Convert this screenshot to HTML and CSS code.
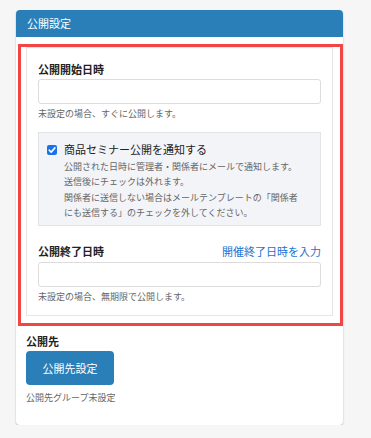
FILE: index.html
```html
<!DOCTYPE html>
<html lang="ja">
<head>
    <meta charset="UTF-8">
    <meta name="viewport" content="width=device-width, initial-scale=1.0">
    <title>公開設定</title>
    <link rel="stylesheet" href="styles.css">
</head>
<body>
    <div class="card">
        <div class="card-head">公開設定</div>
        <div class="card-body">
            <!-- 赤枠で囲んだ部分 -->
            <div class="mark">
                <div class="box">
                    <div class="field-label">公開開始日時</div>
                    <div class="text-input"></div>
                    <p class="help">未設定の場合、すぐに公開します。</p>

                    <div class="notice">
                        <div class="check-row">
                            <span class="check">
                                <svg viewBox="0 0 10 10" width="10" height="10"><path d="M2.2 5.2 L4.2 7.1 L7.9 2.9" fill="none" stroke="#fff" stroke-width="1.6" stroke-linecap="round" stroke-linejoin="round"/></svg>
                            </span>
                            <span>商品セミナー公開を通知する</span>
                        </div>
                        <p class="notice-text first">公開された日時に管理者・関係者にメールで通知します。<br>送信後にチェックは外れます。</p>
                        <p class="notice-text">関係者に送信しない場合はメールテンプレートの「関係者<br>にも送信する」のチェックを外してください。</p>
                    </div>

                    <div class="label-row">
                        <div class="field-label">公開終了日時</div>
                        <a class="link" href="#">開催終了日時を入力</a>
                    </div>
                    <div class="text-input end-input"></div>
                    <p class="help">未設定の場合、無期限で公開します。</p>
                </div>
            </div>

            <div class="field-label target-label">公開先</div>
            <button class="btn">公開先設定</button>
            <p class="help target-help">公開先グループ未設定</p>
        </div>
    </div>
</body>
</html>
```

FILE: styles.css
```css
body {
    margin: 0;
    background-color: #f6f6f6;
    font-family: "Noto Sans CJK JP", "Noto Sans", sans-serif;
    color: #222;
}

.card {
    width: 327px;
    margin: 10px 0 0 16px;
    background-color: #fff;
    border-radius: 4px;
    box-shadow: 0 1px 2px rgba(0, 0, 0, 0.25);
}

.card-head {
    height: 27px;
    line-height: 27px;
    padding: 0 11px;
    background-color: #2a7fb9;
    color: #fff;
    font-size: 11px;
    border-radius: 4px 4px 0 0;
}

.card-body {
    padding: 10px 10px 21px;
}

/* 赤い注目枠 */
.mark {
    position: relative;
}

.mark::after {
    content: "";
    position: absolute;
    top: -3px;
    left: -8px;
    right: -10px;
    bottom: -10px;
    border: 3px solid #f24646;
    pointer-events: none;
}

.box {
    border: 1px solid #e6e6e6;
    padding: 14px 11px 12px;
}

.field-label {
    font-size: 11px;
    font-weight: bold;
    line-height: 14px;
}

.text-input {
    height: 23px;
    margin-top: 3px;
    border: 1px solid #dcdcdc;
    border-radius: 3px;
    background-color: #fff;
}

.end-input {
    margin-top: 4px;
}

.help {
    margin: 3px 0 0;
    font-size: 9px;
    line-height: 13px;
    color: #666;
}

.notice {
    margin-top: 12px;
    padding: 9px 10px 5px 8px;
    background-color: #f3f4f8;
    border: 1px solid #e3e4e8;
}

.check-row {
    display: flex;
    align-items: center;
    gap: 7px;
    font-size: 11px;
    line-height: 15px;
}

.check {
    display: flex;
    width: 10px;
    height: 10px;
    background-color: #1a73e8;
    border-radius: 2px;
}

.notice-text {
    margin: 1px 0 0 17px;
    font-size: 9px;
    line-height: 15px;
    color: #666;
}

.notice-text.first {
    margin-top: 2px;
}

.label-row {
    display: flex;
    justify-content: space-between;
    align-items: center;
    margin-top: 18px;
}

.link {
    font-size: 11px;
    line-height: 14px;
    color: #1a73d0;
    text-decoration: none;
}

.target-label {
    margin-top: 18px;
}

.btn {
    display: block;
    width: 88px;
    height: 34px;
    margin-top: 3px;
    border: none;
    border-radius: 4px;
    background-color: #2a7fb9;
    color: #fff;
    font-family: inherit;
    font-size: 11px;
}

.target-help {
    margin-top: 6px;
}
```
